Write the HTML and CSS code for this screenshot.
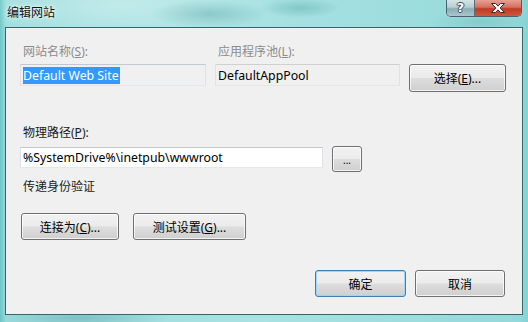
FILE: index.html
```html
<!DOCTYPE html>
<html lang="zh-CN">
<head>
<meta charset="utf-8">
<title>编辑网站</title>
<link rel="stylesheet" href="styles.css">
</head>
<body>
<div class="window">
  <div class="titlebar">
    <span class="title">编辑网站</span>
    <div class="caption-btns">
      <div class="cb help"><span class="q">?</span></div>
      <div class="cb close">
        <svg width="16" height="12" viewBox="0 0 16 12"><path d="M1.5 1.5h4l2.5 2.6 2.5-2.6h4l-4.4 4.5 4.4 4.5h-4l-2.5-2.6-2.5 2.6h-4l4.4-4.5z" fill="#fff" stroke="#3a2a2a" stroke-width="1" stroke-linejoin="round"/></svg>
      </div>
    </div>
  </div>
  <div class="client">
    <div class="top-grid">
      <span class="label disabled">网站名称(<u>S</u>):</span>
      <span class="label disabled">应用程序池(<u>L</u>):</span>
      <span></span>
      <div class="field readonly"><span class="sel">Default Web Site</span></div>
      <div class="field readonly pool">DefaultAppPool</div>
      <button class="btn select">选择(<u>E</u>)...</button>
    </div>
    <div class="label path-label">物理路径(<u>P</u>):</div>
    <div class="path-row">
      <div class="field path">%SystemDrive%\inetpub\wwwroot</div>
      <button class="btn browse">...</button>
    </div>
    <div class="label auth">传递身份验证</div>
    <div class="btn-row">
      <button class="btn connect">连接为(<u>C</u>)...</button>
      <button class="btn test">测试设置(<u>G</u>)...</button>
    </div>
    <div class="footer">
      <button class="btn ok default">确定</button>
      <button class="btn cancel">取消</button>
    </div>
  </div>
</div>
</body>
</html>
```
FILE: styles.css
```css
* { box-sizing: border-box; }
html, body { margin: 0; padding: 0; }
body {
  width: 528px;
  height: 322px;
  overflow: hidden;
  font-family: "Noto Sans", "Noto Sans CJK SC", sans-serif;
  font-size: 12px;
  color: #000;
}
.window {
  width: 528px;
  height: 322px;
  background:
    radial-gradient(ellipse 60px 14px at 210px 14px, rgba(70,150,150,0.35), transparent),
    radial-gradient(ellipse 40px 10px at 300px 8px, rgba(70,150,150,0.35), transparent),
    radial-gradient(ellipse 50px 10px at 480px 22px, rgba(80,160,160,0.25), transparent),
    radial-gradient(ellipse 160px 40px at 120px 6px, rgba(255,255,255,0.35), transparent),
    radial-gradient(ellipse 90px 12px at 80px 318px, rgba(60,140,150,0.35), transparent),
    linear-gradient(90deg, #6cc6c6 0px, #9edddd 6px, #a8e2e2 50%, #94d9da 98%, #86d3d5 100%);
}
.titlebar {
  height: 27px;
  display: flex;
  justify-content: space-between;
  align-items: flex-start;
}
.title {
  margin: 4px 0 0 7px;
  line-height: 16px;
  font-family: "Noto Sans CJK SC", sans-serif;
  color: #111;
  text-shadow: 0 0 6px rgba(255,255,255,0.9), 0 0 3px rgba(255,255,255,0.9);
}
.caption-btns {
  display: flex;
  margin-right: 6px;
  height: 17px;
  border: 1px solid #4b5f6c;
  border-top: none;
  border-radius: 0 0 5px 5px;
  overflow: hidden;
  box-shadow: 0 0 1px rgba(255,255,255,0.6);
}
.cb {
  height: 16px;
  display: flex;
  align-items: center;
  justify-content: center;
}
.help {
  width: 28px;
  border-right: 1px solid #5b6f78;
  background: linear-gradient(#d6e4e6 0%, #b7cdd2 45%, #8eadb3 55%, #a9c7cc 100%);
}
.help .q {
  font-family: "DejaVu Sans", sans-serif;
  font-weight: bold;
  font-size: 13px;
  line-height: 14px;
  color: #fff;
  text-shadow: -1px 0 #3c4c55, 1px 0 #3c4c55, 0 -1px #3c4c55, 0 1px #3c4c55;
}
.close {
  width: 46px;
  background: linear-gradient(#e7a195 0%, #d4705e 45%, #bf3b25 55%, #d0573c 100%);
}
.close svg { display: block; }
.client {
  margin: 0 5px;
  height: 288px;
  border: 1px solid #36666c;
  background: #f0f0f0;
  padding: 16px 17px 0 14px;
}
.label {
  line-height: 16px;
  padding-left: 3px;
  color: #1a1a1a;
  white-space: nowrap;
}
.label.disabled { color: #8c8c8c; }
.top-grid {
  display: grid;
  grid-template-columns: 186px 185px 97px;
  column-gap: 9px;
  row-gap: 4px;
  align-items: start;
}
.field {
  height: 22px;
  display: flex;
  align-items: center;
  padding-left: 2px;
  white-space: nowrap;
  font-size: 12.3px;
  border: 1px solid;
  border-color: #c3c9d0 #dde2e8 #e3e8ee #dde2e8;
}
.field.readonly { background: #f0f0f0; }
.field.pool { padding-left: 2px; border-color: #d0d0d0 #e2e2e2 #e6e6e6 #e2e2e2; }
.sel {
  background: #3399ff;
  color: #fff;
  line-height: 17px;
  padding-right: 1px;
}
.btn {
  font-family: inherit;
  font-size: 12px;
  color: #000;
  height: 27px;
  padding: 0;
  border: 1px solid #707070;
  border-radius: 3px;
  background: linear-gradient(#f2f2f2 0%, #ebebeb 48%, #dddddd 52%, #cfcfcf 100%);
  box-shadow: inset 0 0 0 1px rgba(255,255,255,0.75);
  white-space: nowrap;
}
.btn.select { height: 28px; width: 97px; }
.path-label { margin-top: 33px; }
.path-row {
  margin-top: 5px;
  display: flex;
  align-items: flex-start;
  column-gap: 9px;
}
.field.path {
  width: 303px;
  height: 21px;
  margin-top: 1px;
  background: #fff;
}
.btn.browse {
  width: 30px;
  height: 26px;
  font-size: 10px;
  padding-top: 2px;
}
.auth { margin-top: 7px; }
.btn-row {
  margin-top: 18px;
  margin-left: 1px;
  display: flex;
  column-gap: 14px;
}
.btn.connect { width: 98px; }
.btn.test { width: 113px; }
.footer {
  margin-top: 30px;
  display: flex;
  justify-content: flex-end;
  column-gap: 9px;
}
.btn.ok { width: 91px; }
.btn.cancel { width: 90px; }
.btn.default {
  border-color: #3c7fb1;
  box-shadow: inset 0 0 0 1px #9fd6f3;
}
```
